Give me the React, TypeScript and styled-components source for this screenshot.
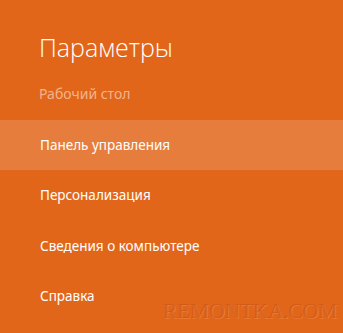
import React from "react";
import styled, { createGlobalStyle } from "styled-components";

const GlobalStyle = createGlobalStyle`
  html, body {
    margin: 0;
    padding: 0;
    background: #e2661a;
  }
  body {
    font-family: "Segoe UI", "Noto Sans", "Open Sans", sans-serif;
  }
`;

const items = [
  { label: "Панель управления", active: true },
  { label: "Персонализация" },
  { label: "Сведения о компьютере" },
  { label: "Справка" },
];

const App = () => {
  return (
    <>
      <GlobalStyle />
      <Pane>
        <Header>
          <Title>Параметры</Title>
          <Subtitle>Рабочий стол</Subtitle>
        </Header>
        <Menu>
          {items.map((item) => (
            <Item key={item.label} $active={item.active}>
              {item.label}
            </Item>
          ))}
        </Menu>
        <Watermark>REMONTKA.COM</Watermark>
      </Pane>
    </>
  );
};

const Pane = styled.div`
  position: relative;
  width: 343px;
  height: 333px;
  overflow: hidden;
  background: #e2661a;
  color: #fff;
`;

const Header = styled.div`
  display: flex;
  flex-direction: column;
  padding: 31px 0 0 39px;
  height: 120px;
  box-sizing: border-box;
`;

const Title = styled.h1`
  margin: 0;
  font-family: "Open Sans", "Noto Sans", sans-serif;
  font-weight: 300;
  font-size: 25px;
  line-height: 32px;
  color: #fff;
`;

const Subtitle = styled.div`
  margin-top: 22px;
  font-size: 14px;
  line-height: 18px;
  color: #f2b48c;
`;

const Menu = styled.ul`
  list-style: none;
  margin: 0;
  padding: 0;
`;

const Item = styled.li<{ $active?: boolean }>`
  display: flex;
  align-items: center;
  height: 50.3px;
  padding-left: 40px;
  font-size: 13.5px;
  color: #fff;
  background: ${(p) => (p.$active ? "#e67d3d" : "transparent")};
`;

const Watermark = styled.div`
  position: absolute;
  right: 6px;
  bottom: 9px;
  font-family: "Liberation Serif", serif;
  font-size: 22px;
  letter-spacing: -0.5px;
  color: rgba(175, 75, 25, 0.4);
  text-shadow: 1px 1px 0 rgba(255, 170, 110, 0.3);
`;

export default App;
